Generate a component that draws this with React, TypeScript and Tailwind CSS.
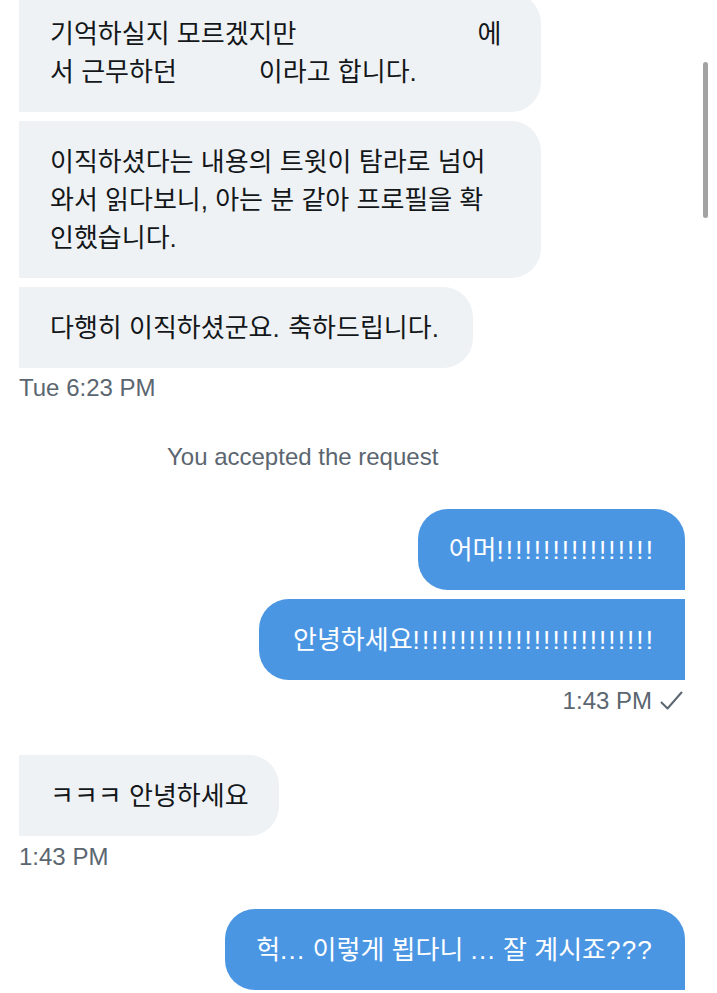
import React from "react";

const FONT = { fontFamily: '"Liberation Sans", "Noto Sans CJK KR", sans-serif' };

function Bang({ n }: { n: number }) {
  return <span className="tracking-[2.1px]">{"!".repeat(n)}</span>;
}

function P({ children }: { children: React.ReactNode }) {
  return <span className="tracking-[1.2px]">{children}</span>;
}

export default function App() {
  return (
    <div className="relative w-[717px] h-[993px] overflow-hidden bg-white" style={FONT}>
      {/* scrollbar */}
      <div className="absolute left-[703px] top-[62px] w-[5px] h-[156px] rounded-full bg-[#a3a3a3]" />

      <div className="flex flex-col pl-[19px] pr-[32px] mt-[-7px] text-[26px] leading-[38px]">
        {/* received group */}
        <div className="flex flex-col gap-[9px] items-start">
          <div className="w-[522px] bg-[#eef2f4] text-[#14171a] rounded-r-[30px] pl-[31px] pr-[30px] py-[21.5px] whitespace-nowrap">
            <div>
              기억하실지 모르겠지만<span className="inline-block w-[181px]" />에
            </div>
            <div>
              서 근무하던<span className="inline-block w-[82px]" />이라고 합니다.
            </div>
          </div>
          <div className="w-[522px] bg-[#eef2f4] text-[#14171a] rounded-r-[30px] pl-[31px] pr-[30px] py-[21.5px] whitespace-nowrap">
            <div>이직하셨다는 내용의 트윗이 탐라로 넘어</div>
            <div>와서 읽다보니, 아는 분 같아 프로필을 확</div>
            <div>인했습니다.</div>
          </div>
          <div className="bg-[#eef2f4] text-[#14171a] rounded-r-[30px] pl-[31px] pr-[34px] py-[21.5px] whitespace-nowrap">
            다행히 이직하셨군요<P>.</P> 축하드립니다.
          </div>
        </div>

        <div className="mt-[6px] h-[28px] leading-[28px] text-[24px] text-[#5b6670]">Tue 6:23 PM</div>

        <div className="mt-[41px] h-[28px] leading-[28px] text-[24px] text-[#5b6670] pl-[148px]">
          You accepted the request
        </div>

        {/* sent group */}
        <div className="mt-[38px] flex flex-col gap-[9px] items-end">
          <div className="bg-[#4b96e3] text-white rounded-tl-[30px] rounded-bl-[30px] rounded-tr-[30px] pl-[31px] pr-[30px] py-[21.5px] whitespace-nowrap">
            어머<Bang n={17} />
          </div>
          <div className="bg-[#4b96e3] text-white rounded-tl-[30px] rounded-bl-[30px] pl-[34px] pr-[30px] py-[21.5px] whitespace-nowrap">
            안녕하세요<Bang n={26} />
          </div>
        </div>

        <div className="mt-[7px] h-[28px] leading-[28px] text-[24px] text-[#5b6670] flex items-center justify-end gap-[8px] pr-[2px]">
          <span>1:43 PM</span>
          <svg width="23" height="20" viewBox="0 0 23 20" fill="none">
            <path d="M1.5 11.5 L7.5 17.5 L21.5 1.5" stroke="#5b6670" strokeWidth="2" strokeLinecap="round" strokeLinejoin="round" />
          </svg>
        </div>

        <div className="mt-[40px] flex flex-col items-start">
          <div className="bg-[#eef2f4] text-[#14171a] rounded-r-[30px] pl-[31px] pr-[30px] py-[21.5px] whitespace-nowrap">
            ㅋㅋㅋ 안녕하세요
          </div>
        </div>

        <div className="mt-[7px] h-[28px] leading-[28px] text-[24px] text-[#5b6670]">1:43 PM</div>

        <div className="mt-[38px] flex flex-col items-end">
          <div className="bg-[#4b96e3] text-white rounded-tl-[30px] rounded-bl-[30px] rounded-tr-[30px] pl-[31px] pr-[32px] py-[21.5px] whitespace-nowrap">
            헉<P>...</P> 이렇게 뵙다니 <P>...</P> 잘 계시죠<P>???</P>
          </div>
        </div>
      </div>
    </div>
  );
}
